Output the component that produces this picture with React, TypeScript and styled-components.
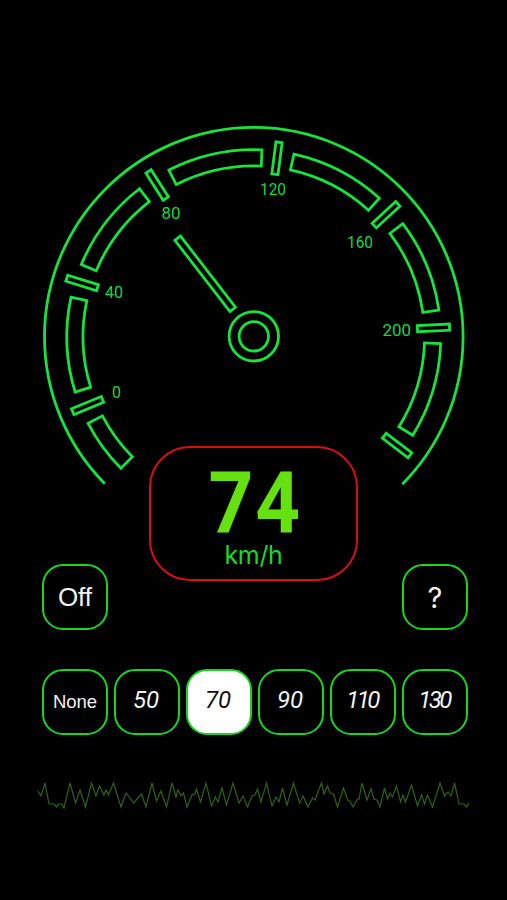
import React from "react";
import styled, { createGlobalStyle } from "styled-components";

const NEON = "#17e33b";

const GlobalStyle = createGlobalStyle`
  html, body { margin: 0; background: #000; }
`;

const Screen = styled.main`
  box-sizing: border-box;
  width: 507px;
  height: 900px;
  overflow: hidden;
  background: #000;
  display: flex;
  flex-direction: column;
  align-items: center;
`;

const DialSvg = styled.svg`
  display: block;
  flex: none;
  width: 507px;
  height: 446px;
  overflow: visible;
  fill: none;
  stroke: ${NEON};
  stroke-width: 2.8px;
`;

const DialLabel = styled.text`
  fill: #19d83a;
  stroke: none;
  font: 400 17px Roboto, sans-serif;
`;

const Readout = styled.section`
  box-sizing: border-box;
  flex: none;
  width: 209px;
  height: 135px;
  border: 2px solid #dd0d0d;
  border-radius: 41px;
  display: flex;
  flex-direction: column;
  align-items: center;
  padding-top: 23px;
`;

const Speed = styled.div`
  height: 63px;
  line-height: 63px;
  padding-left: 3px;
  font-family: Roboto, sans-serif;
  font-weight: 700;
  font-size: 86px;
  letter-spacing: 2px;
  transform: scaleX(0.91);
  color: #65e011;
`;

const Unit = styled.div`
  margin-top: 6px;
  line-height: 30px;
  font-family: Inter, sans-serif;
  font-size: 25px;
  letter-spacing: -0.3px;
  color: #17da24;
`;

const ActionRow = styled.div`
  width: 426px;
  margin-top: -17px;
  padding-left: 3px;
  display: flex;
  justify-content: space-between;
`;

const LimitRow = styled.div`
  width: 426px;
  margin-top: 39px;
  padding-left: 3px;
  display: flex;
  justify-content: space-between;
`;

const Key = styled.button<{ $active?: boolean; $size: number; $face?: string }>`
  box-sizing: border-box;
  width: 66px;
  height: 66px;
  padding: 0;
  border: 2px solid #19d51c;
  border-radius: 21px;
  background: ${(p) => (p.$active ? "#fff" : "#000")};
  color: ${(p) => (p.$active ? "#111" : "#f2f2f2")};
  font-family: ${(p) => p.$face ?? '"Liberation Sans"'}, sans-serif;
  font-size: ${(p) => p.$size}px;
  display: flex;
  align-items: center;
  justify-content: center;
`;

const LimitValue = styled.span<{ $tight?: boolean }>`
  font-family: Roboto, sans-serif;
  font-style: italic;
  font-size: 24px;
  line-height: 24px;
  letter-spacing: ${(p) => (p.$tight ? "-2.5px" : "0")};
  transform: translate(-1px, -2px);
`;

const Wave = styled.svg`
  display: block;
  flex: none;
  width: 507px;
  height: 34px;
  margin-top: 43px;
  fill: none;
  stroke: #2f6219;
  stroke-width: 1.2px;
`;

const CX = 253.8;
const CY = 336.7;

const at = (radius: number, degrees: number) => {
  const a = (degrees * Math.PI) / 180;
  return `${(CX + radius * Math.cos(a)).toFixed(2)} ${(CY + radius * Math.sin(a)).toFixed(2)}`;
};

const band = (from: number, to: number) =>
  `M${at(187, from)}A187 187 0 0 1 ${at(187, to)}L${at(170.8, to)}A170.8 170.8 0 0 0 ${at(170.8, from)}Z`;

const BANDS = [
  [135.3, 152.4],
  [162.8, 192.2],
  [202.7, 232.3],
  [243, 272.5],
  [282.4, 312.2],
  [322.8, 351.8],
  [2.1, 31.8],
];

const TICKS = [157.5, 197.4, 237.5, 277.4, 317.3, 357.2, 397.2];

const LABELS = [
  { text: "0", x: 112, y: 398, width: 9 },
  { text: "40", x: 105, y: 298, width: 18 },
  { text: "80", x: 161.5, y: 219, width: 19 },
  { text: "120", x: 260, y: 194.5, width: 26 },
  { text: "160", x: 347, y: 247.5, width: 26 },
  { text: "200", x: 382.5, y: 335.5, width: 28.5 },
];

const LIMITS = ["50", "70", "90", "110", "130"];

const WAVE_POINTS = [
  [38, 21], [41, 26], [45, 13], [49, 34], [54, 34], [56.5, 37], [59, 34], [62, 34], [64, 38],
  [70, 13], [75.5, 33], [80, 20], [85.5, 37], [91.5, 13], [96, 26], [99.5, 16], [104, 25],
  [106, 20], [108.5, 25], [113.5, 13], [121, 37], [126, 23], [133.5, 33], [141.5, 24], [146, 37],
  [152, 13], [156.5, 31], [161, 21], [166.5, 37], [172, 13], [176, 27], [178, 20], [181, 26],
  [183.5, 23], [187, 37], [192, 25], [195, 24], [196.5, 19], [200.5, 32], [206, 13], [211.5, 36],
  [215.5, 27], [218, 32], [222, 18], [226.5, 35], [233, 13], [239, 33], [243, 26], [247.5, 37],
  [252, 26], [255, 25], [257.5, 19], [261, 32], [266.5, 13], [272, 36], [276, 27], [279, 32],
  [282.5, 18], [287, 35], [293.5, 13], [299.5, 33], [303, 26], [308, 37], [312.5, 28], [315, 30],
  [321.5, 13], [324, 24], [327.5, 16], [330, 23], [333.5, 24], [337.5, 37], [343.5, 18],
  [348, 31], [350, 31], [353, 37], [357, 30], [359, 29], [362, 13], [367, 30], [371, 19],
  [374, 29], [377, 30], [380, 37], [384.5, 18], [387.5, 29], [390, 23], [392.5, 27],
  [396.5, 16], [400.5, 32], [403, 25], [405.5, 32], [411.5, 15], [417.5, 36], [421.5, 25],
  [424.5, 34], [427.5, 25], [432.5, 37], [440, 13], [444.5, 26], [448, 22], [451, 26],
  [454.5, 13], [459, 34], [464, 34], [466.5, 37], [469, 33],
];

function Dial() {
  return (
    <DialSvg viewBox="0 0 507 446" role="img" aria-label="Speedometer">
      <path d={`M${at(209.3, 135.4)}A209.3 209.3 0 1 1 ${at(209.3, 44.8)}`} />
      {BANDS.map(([from, to]) => (
        <path key={from} d={band(from, to)} />
      ))}
      {TICKS.map((angle) => (
        <rect
          key={angle}
          x={CX + 163.8}
          y={CY - 3.1}
          width={32.2}
          height={6.2}
          transform={`rotate(${angle} ${CX} ${CY})`}
        />
      ))}
      <rect
        x={CX + 34.5}
        y={CY - 3.5}
        width={90}
        height={7}
        transform={`rotate(232.3 ${CX} ${CY})`}
      />
      <circle cx={CX} cy={336.3} r={24.7} />
      <circle cx={CX} cy={336.3} r={14.7} />
      {LABELS.map((l) => (
        <DialLabel key={l.text} x={l.x} y={l.y} textLength={l.width} lengthAdjust="spacingAndGlyphs">
          {l.text}
        </DialLabel>
      ))}
    </DialSvg>
  );
}

export default function App() {
  return (
    <Screen>
      <GlobalStyle />
      <Dial />
      <Readout>
        <Speed>74</Speed>
        <Unit>km/h</Unit>
      </Readout>
      <ActionRow>
        <Key $size={26}>Off</Key>
        <Key $size={29} $face="Inter">?</Key>
      </ActionRow>
      <LimitRow>
        <Key $size={18.5}>None</Key>
        {LIMITS.map((value) => (
          <Key key={value} $size={24} $active={value === "70"}>
            <LimitValue $tight={value.length > 2}>{value}</LimitValue>
          </Key>
        ))}
      </LimitRow>
      <Wave viewBox="0 8 507 34" aria-hidden="true">
        <polyline points={WAVE_POINTS.map((p) => p.join(",")).join(" ")} />
      </Wave>
    </Screen>
  );
}
